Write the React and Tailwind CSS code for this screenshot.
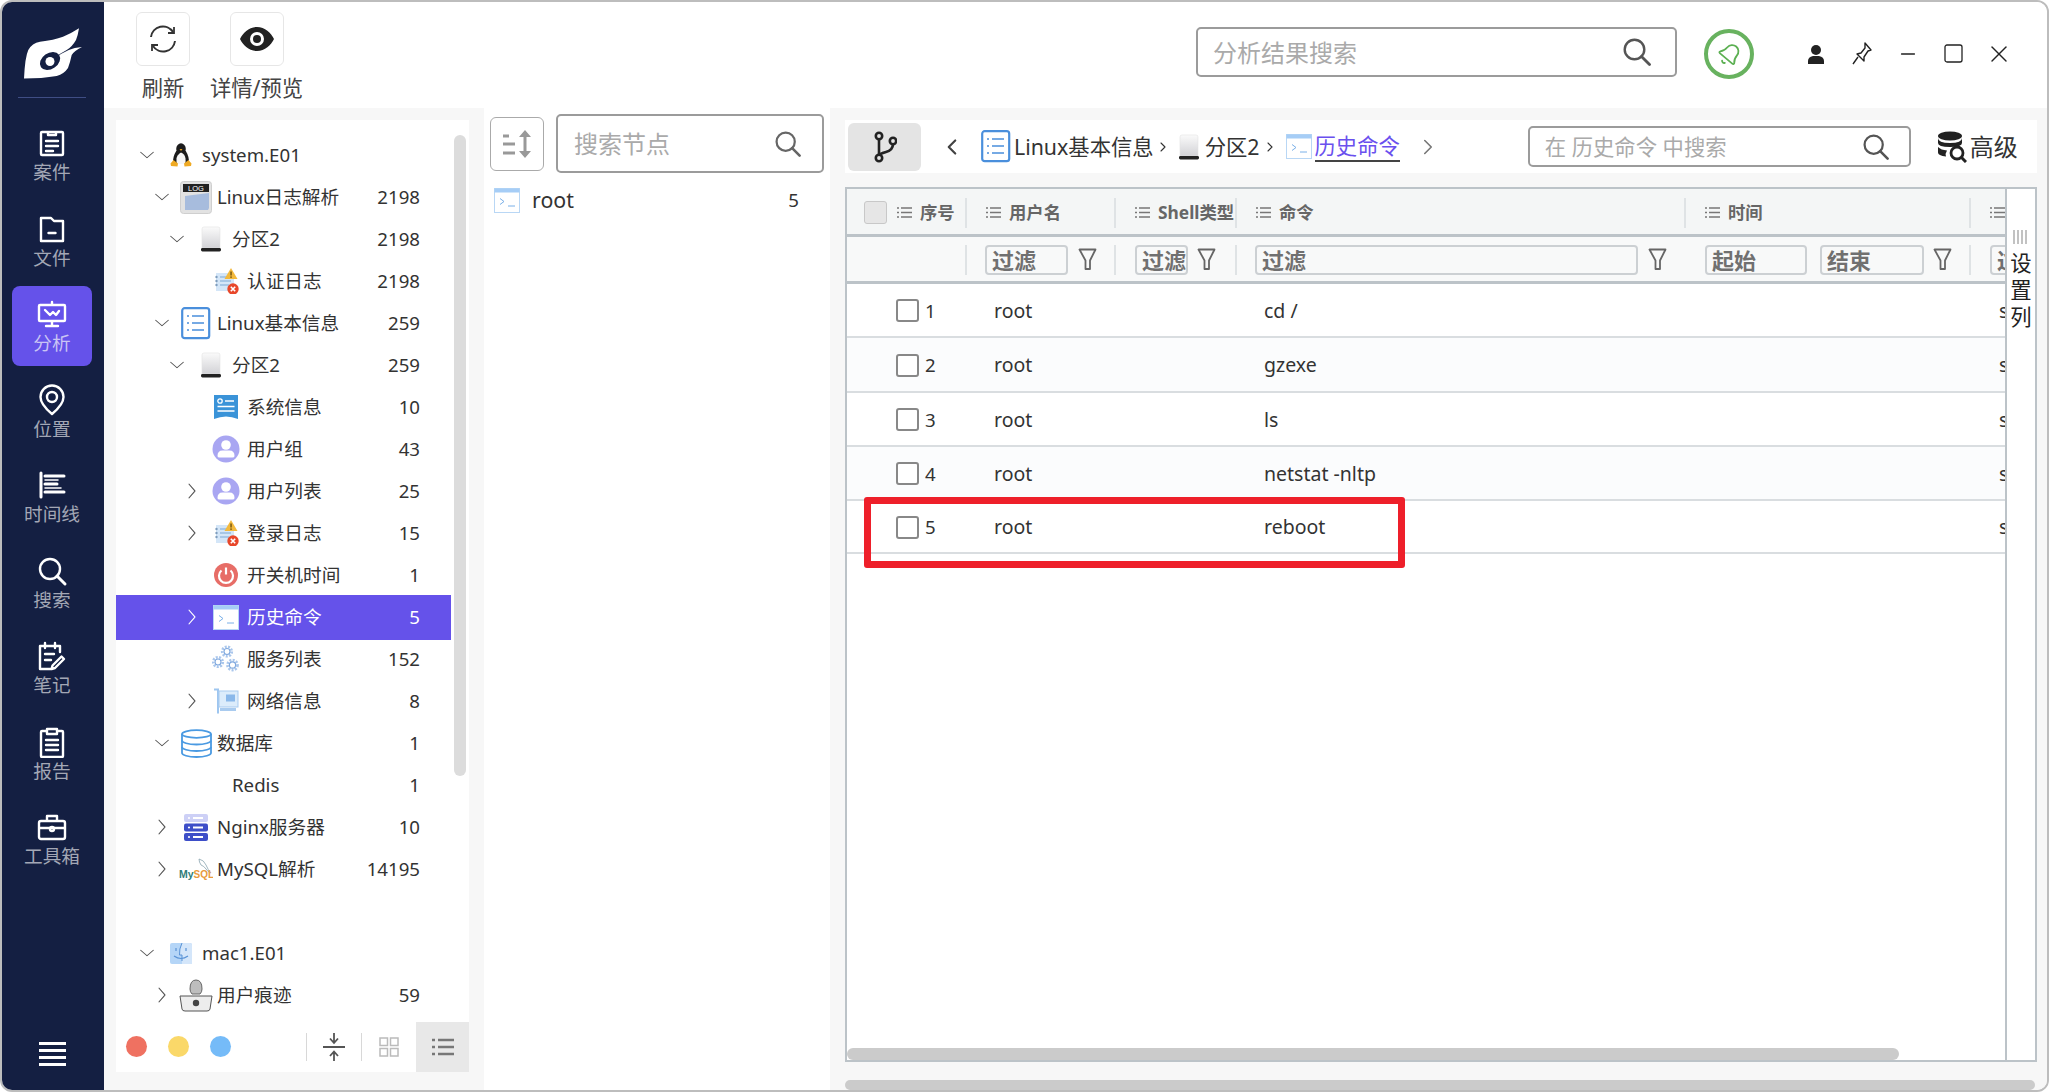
import React from 'react';
import { ChevronDown, ChevronRight, ChevronLeft, Minus, X, Bell } from 'lucide-react';

const Nav = ({ label, active, children }) => (
  <div className={`w-[80px] h-[80px] rounded-[8px] flex flex-col items-center pt-[14px] ${active ? 'bg-[#6552ea] text-[#c9c4f4]' : 'text-[#a3a7b5]'}`}>
    <svg width="32" height="32" viewBox="0 0 32 32" fill="none" stroke="#fff" strokeWidth="2.4" strokeLinecap="round" strokeLinejoin="round" className="-my-[2px]">{children}</svg>
    <span className="text-[18.67px] leading-[24px] mt-[3px] whitespace-nowrap">{label}</span>
  </div>
);

const Lens = ({ size, color }) => (
  <svg width={size} height={size} viewBox="0 0 28 28" fill="none" stroke={color} strokeWidth="2.4" strokeLinecap="round" className="ml-auto shrink-0">
    <circle cx="11.500" cy="11.500" r="9.800" /><path d="M18.500 18.500l8 8" strokeWidth="2.800" />
  </svg>
);

const Disk = () => (
  <svg width="24" height="28" viewBox="0 0 24 28">
    <defs><linearGradient id="dk" x1="0" y1="0" x2="0" y2="1"><stop offset="0" stopColor="#fafafa" /><stop offset="1" stopColor="#d2d2d6" /></linearGradient></defs>
    <path d="M3 4q0-2 2-2h14q2 0 2 2v19H3z" fill="url(#dk)" stroke="#e3e3e3" strokeWidth=".6" />
    <rect x="2" y="23" width="20" height="3.4" rx="1.4" fill="#222" />
  </svg>
);
const Alert = () => (
  <svg width="26" height="26" viewBox="0 0 26 26">
    <rect x="3" y="5" width="18" height="18" fill="#d4e6f8" />
    <g stroke="#7aa7d4" strokeWidth="1"><path d="M7 9h11M7 13h11M7 17h9" /></g>
    <g fill="#7f9dbd"><circle cx="3.5" cy="9" r="1.2" /><circle cx="3.5" cy="13" r="1.2" /><circle cx="3.5" cy="17" r="1.2" /></g>
    <path d="M18 0l6.5 11h-13z" fill="#f3b93c" />
    <rect x="17.3" y="3.5" width="1.5" height="4" fill="#7a5a12" /><rect x="17.3" y="8.4" width="1.5" height="1.5" fill="#7a5a12" />
    <circle cx="20" cy="21" r="5.7" fill="#e8472a" />
    <path d="M17.8 18.8l4.4 4.4M22.2 18.8l-4.4 4.4" stroke="#fff" strokeWidth="1.6" />
  </svg>
);
const ListI = () => (
  <svg width="30" height="33" viewBox="0 0 30 33" fill="none">
    <rect x="1.2" y="1.2" width="27" height="30" rx="2.5" stroke="#4a8fdc" strokeWidth="2.2" fill="#fff" />
    <g stroke="#4a8fdc" strokeWidth="1.6"><path d="M11 9h12M11 16h12M11 23h12M6 9h2M6 16h2M6 23h2" /></g>
  </svg>
);
const SysInfo = () => (
  <svg width="26" height="26" viewBox="0 0 26 26">
    <path d="M1 1h24v24q-6-2.6-12-2.6T1 25z" fill="#3a93d8" />
    <circle cx="7" cy="7" r="2.2" fill="none" stroke="#fff" strokeWidth="1.3" />
    <path d="M12 7h9M4.500 12.500h17M4.500 17h17" stroke="#fff" strokeWidth="1.6" />
  </svg>
);
const User = () => (
  <svg width="28" height="28" viewBox="0 0 28 28">
    <circle cx="14" cy="14" r="13.500" fill="#a9a6f2" />
    <circle cx="14" cy="10" r="4.800" fill="#fff" />
    <path d="M5.500 21q0-5.500 5-5.500h7q5 0 5 5.500 0 1.500-2 1.500h-13q-2 0-2-1.500z" fill="#fff" />
  </svg>
);
const Power = () => (
  <svg width="26" height="26" viewBox="0 0 26 26" fill="none">
    <circle cx="13" cy="13" r="12" fill="#e76d67" />
    <path d="M8.500 8.500a7 7 0 1 0 9 0" stroke="#fff" strokeWidth="2.200" />
    <path d="M13 5.500v7" stroke="#fff" strokeWidth="2.200" />
  </svg>
);
const Term = () => (
  <svg width="26" height="25" viewBox="0 0 26 25">
    <rect x=".5" y=".5" width="25" height="24" fill="#fff" stroke="#b9d7f5" />
    <rect x=".5" y=".5" width="25" height="4" fill="#a6cdf6" />
    <path d="M6 10.500l4 3-4 3" fill="none" stroke="#7ab0e8" strokeWidth="1" />
    <path d="M14 18h7" stroke="#7ab0e8" strokeWidth="1" />
  </svg>
);
const Gear = ({ cx, cy, r }) => (
  <g>
    <circle cx={cx} cy={cy} r={r} fill="none" stroke="#a9c6ec" strokeWidth={r * 0.55} strokeDasharray="2 1.300" />
    <circle cx={cx} cy={cy} r={r * 0.62} fill="none" stroke="#7fa8de" strokeWidth="1.100" />
  </g>
);
const Gears = () => (
  <svg width="28" height="28" viewBox="0 0 28 28"><Gear cx={15} cy={6.500} r={4.800} /><Gear cx={6} cy={17} r={4.800} /><Gear cx={20.500} cy={20} r={5} /></svg>
);
const NetCard = () => (
  <svg width="26" height="28" viewBox="0 0 26 28">
    <path d="M1 1.500h5v25H4V3.500H1z" fill="#9ec6f0" />
    <rect x="6" y="4" width="19" height="16" fill="#dcecfb" stroke="#a9cbef" />
    <rect x="13" y="7.500" width="9" height="7" fill="#8ab8ea" />
    <rect x="7" y="21" width="16" height="3" fill="#a9cbef" />
  </svg>
);
const Db = () => (
  <svg width="31" height="29" viewBox="0 0 31 29" fill="#fff" stroke="#4a9ae2" strokeWidth="1.800">
    <path d="M1 5v19c0 2 6 4 14.500 4S30 26 30 24V5" />
    <ellipse cx="15.500" cy="5" rx="14.500" ry="3.800" fill="#fff" />
    <path d="M1 11.500c0 2 6 4 14.500 4s14.500-2 14.500-4M1 18c0 2 6 4 14.500 4S30 20 30 18" fill="none" />
  </svg>
);
const Nginx = () => (
  <svg width="26" height="28" viewBox="0 0 26 28">
    <rect x="1" y="1" width="24" height="8" rx="2" fill="#cdd0f6" />
    <rect x="1" y="10.500" width="24" height="8" rx="2" fill="#3d4ec8" />
    <rect x="1" y="20" width="24" height="8" rx="2" fill="#3d4ec8" />
    <g fill="#fff"><circle cx="6" cy="5" r="1.100" /><rect x="10" y="4" width="10" height="2" /><circle cx="6" cy="14.500" r="1.100" /><rect x="10" y="13.500" width="10" height="2" /><circle cx="6" cy="24" r="1.100" /><rect x="10" y="23" width="10" height="2" /></g>
  </svg>
);
const MySql = () => (
  <svg width="34" height="22" viewBox="0 0 34 22">
    <path d="M20 1q5 1 7 6t5 8q-3-1-5-4t-5-4q-2-3-2-6z" fill="none" stroke="#8aa4b0" strokeWidth=".8" />
    <text x="0" y="20" fontSize="10.500" fontWeight="700" fontFamily="Liberation Sans" fill="#2f7d78">My</text>
    <text x="14.500" y="20" fontSize="10" fontFamily="Liberation Sans" fontWeight="700" fill="#e89a3c">SQL</text>
  </svg>
);
const Finder = () => (
  <svg width="24" height="23" viewBox="0 0 24 23">
    <rect x="1" y="1" width="22" height="21" rx="2" fill="#b4d5f7" />
    <path d="M13 1q-3 6-2.500 12H13v9h10V3q0-2-2-2z" fill="#d4e6fa" />
    <path d="M7 6v3M17 6v3M5 14q7 5 14 0" fill="none" stroke="#5a93d6" strokeWidth="1.200" />
    <path d="M13 1q-3 6-2.500 12H13v6" fill="none" stroke="#5a93d6" strokeWidth="1" />
  </svg>
);
const UserLap = () => (
  <svg width="34" height="34" viewBox="0 0 34 34">
    <path d="M11 11q0-9 6-9t6 9q0 3-2 5h-8q-2-2-2-5z" fill="#bdbdbd" stroke="#666" />
    <path d="M1 18h32l-2 13q-.300 2-3 2H6q-2.700 0-3-2z" fill="#ededed" stroke="#555" />
    <circle cx="17" cy="25" r="3.200" fill="#444" />
  </svg>
);
const Penguin = () => (
  <svg width="22" height="24" viewBox="0 0 22 24">
    <ellipse cx="11" cy="6" rx="4.800" ry="5.800" fill="#1c1c1c" />
    <path d="M6.200 8Q2.500 14 3.200 20h15.600Q19.500 14 15.800 8z" fill="#1c1c1c" />
    <path d="M11 9.500Q15 11 15.500 15.500T14.500 21h-7Q6 19 6.500 15.500T11 9.500z" fill="#f6f6f6" />
    <path d="M9.500 6h3L11 8z" fill="#e8a020" />
    <path d="M3.500 17l4.500 3.500-.500 3-6.500-.5-.5-2.500zM18.500 17l-4.500 3.500.500 3 6.500-.5.500-2.500z" fill="#efaa24" />
  </svg>
);
const LogI = () => (
  <svg width="32" height="33" viewBox="0 0 32 33">
    <rect x=".5" y=".5" width="31" height="32" rx="3" fill="#e2e2e2" stroke="#cfcfcf" />
    <rect x="3" y="3" width="26" height="8" fill="#222" />
    <text x="16" y="10" textAnchor="middle" fontSize="7.500" fontFamily="Liberation Sans" fill="#fff">LOG</text>
    <path d="M5 15l24-3v15l-1 2H5z" fill="#a7bcdd" />
  </svg>
);

const icons = { Disk, Alert, ListI, SysInfo, User, Power, Term, Gears, NetCard, Db, Nginx, MySql, Finder, UserLap, Penguin, LogI };

const rows = [
  { l: 0, o: 'd', i: 'Penguin', t: 'system.E01' },
  { l: 1, o: 'd', i: 'LogI', t: 'Linux日志解析', c: '2198' },
  { l: 2, o: 'd', i: 'Disk', t: '分区2', c: '2198' },
  { l: 3, i: 'Alert', t: '认证日志', c: '2198' },
  { l: 1, o: 'd', i: 'ListI', t: 'Linux基本信息', c: '259' },
  { l: 2, o: 'd', i: 'Disk', t: '分区2', c: '259' },
  { l: 3, i: 'SysInfo', t: '系统信息', c: '10' },
  { l: 3, i: 'User', t: '用户组', c: '43' },
  { l: 3, o: 'r', i: 'User', t: '用户列表', c: '25' },
  { l: 3, o: 'r', i: 'Alert', t: '登录日志', c: '15' },
  { l: 3, i: 'Power', t: '开关机时间', c: '1' },
  { l: 3, o: 'r', i: 'Term', t: '历史命令', c: '5', sel: true },
  { l: 3, i: 'Gears', t: '服务列表', c: '152' },
  { l: 3, o: 'r', i: 'NetCard', t: '网络信息', c: '8' },
  { l: 1, o: 'd', i: 'Db', t: '数据库', c: '1' },
  { l: 2, t: 'Redis', c: '1' },
  { l: 1, o: 'r', i: 'Nginx', t: 'Nginx服务器', c: '10' },
  { l: 1, o: 'r', i: 'MySql', t: 'MySQL解析', c: '14195' },
  { blank: true },
  { l: 0, o: 'd', i: 'Finder', t: 'mac1.E01' },
  { l: 1, o: 'r', i: 'UserLap', t: '用户痕迹', c: '59' },
];

const pads = ['pl-[16px]', 'pl-[31px]', 'pl-[46px]', 'pl-[61px]'];

const TreeRow = ({ r }) => {
  if (r.blank) return <div className="h-[42px]" />;
  const I = r.i && icons[r.i];
  return (
    <div className={`flex items-center pr-[31px] ${pads[r.l]} ${r.sel ? 'h-[45px] -my-[1.5px] bg-[#6552ea] text-white relative' : 'h-[42px] text-[#333]'}`}>
      <span className="w-[30px] flex justify-center shrink-0">
        {r.o === 'd' && <ChevronDown size={22} strokeWidth={1} className="text-[#555] scale-x-[1.15]" />}
        {r.o === 'r' && <ChevronRight size={24} strokeWidth={1} className={`scale-y-[1.15] ${r.sel ? 'text-white' : 'text-[#555]'}`} />}
      </span>
      <span className="w-[38px] flex justify-center shrink-0">{I && <I />}</span>
      <span className="ml-[2px] whitespace-nowrap">{r.t}</span>
      <span className="ml-auto">{r.c}</span>
    </div>
  );
};

const ListMini = () => (
  <svg width="15" height="13" viewBox="0 0 15 13" stroke="#777" strokeWidth="1.500" className="shrink-0"><path d="M4 2h11M4 6.500h11M4 11h11M0 2h2M0 6.500h2M0 11h2" /></svg>
);
const Funnel = () => (
  <svg width="19" height="23" viewBox="0 0 19 23" fill="none" stroke="#666" strokeWidth="1.800" strokeLinejoin="round" className="shrink-0"><path d="M1.500 1.500h16L12 12.500V21H7.500v-8.500z" /></svg>
);
const Sep = () => <div className="w-[2px] h-[30px] bg-[#dfe3e5] ml-auto shrink-0" />;
const FInput = ({ cls, t }) => (
  <div className={`${cls} h-[30px] border-2 border-[#ccd0d3] rounded-[4px] pl-[5px] pr-[2px] flex items-center text-[22px] font-bold text-[#707070] leading-none overflow-hidden bg-[#f8f9f9] shrink-0 whitespace-nowrap`}>{t}</div>
);
const HCell = ({ pad, t }) => (
  <div className={`flex items-center ${pad} overflow-hidden`}>
    <ListMini />
    <span className="ml-[8px] text-[17.33px] font-bold text-[#666] whitespace-nowrap">{t}</span>
    <Sep />
  </div>
);
const columns = 'grid grid-cols-[120px_149px_121px_449px_285px_100px]';
const data = [['1', 'cd /', 'h-[54px]'], ['2', 'gzexe', 'h-[55px] bg-[#fbfcfd]'], ['3', 'ls', 'h-[54px]'], ['4', 'netstat -nltp', 'h-[54px] bg-[#fbfcfd]'], ['5', 'reboot', 'h-[53px]']];

const Chk = ({ cls }) => <span className={`w-[23px] h-[23px] rounded-[3px] border-[2.5px] shrink-0 ${cls}`} />;

export default function App() {
  return (
    <div className="w-[2049px] h-[1092px] overflow-hidden rounded-[12px] border-2 border-[#bdbdbd] bg-white flex text-[18.67px] [font-family:'Noto_Sans','Noto_Sans_CJK_SC',sans-serif]">
      {/* sidebar */}
      <aside className="w-[102px] shrink-0 bg-[#141f42] flex flex-col items-center pb-[24px] pr-[2px]">
        <svg width="60" height="54" viewBox="0 0 60 54" className="mt-[25px] shrink-0">
          <path d="M2 51.500Q3 30 6.300 23Q10 16 18 14.700Q32 13 41 9.700Q50 6 57 1.300Q56 8 54 13Q50 20 44.700 23Q38 26 34 31Q45 21 60 20Q52 24 49.700 28Q48 36 46 41Q42 47 34.700 49Q20 51.500 2 51.500Z" fill="#fff" />
          <ellipse cx="28" cy="34" rx="11" ry="8" fill="#141f42" transform="rotate(-35 28 34)" />
          <circle cx="28" cy="34.500" r="4.500" fill="#fff" />
        </svg>
        <div className="w-[68px] h-[1px] bg-[#3f4d84] mt-[16px] mb-[17px] shrink-0" />
        <div className="flex flex-col gap-[5.5px]">
          <Nav label="案件"><path d="M6 5h20a1 1 0 0 1 1 1v21a1 1 0 0 1-1 1H6a1 1 0 0 1-1-1V6a1 1 0 0 1 1-1zM12 5v3h8V5M10 14h12M10 19h12M10 24h7" /></Nav>
          <Nav label="文件"><path d="M5 5h10l3 3h9v20H5zM12.500 20h7" /></Nav>
          <Nav label="分析" active><path d="M4 7h24a1 1 0 0 1 1 1v14a1 1 0 0 1-1 1H4a1 1 0 0 1-1-1V8a1 1 0 0 1 1-1zM16 4v3M16 23v5M10 28h12M9 12l5 5 3-3 3 3 3-4" /></Nav>
          <Nav label="位置"><path d="M16 30C10 25 4.500 19 4.500 13a11.500 11.500 0 0 1 23 0c0 6-5.500 12-11.500 17z" /><circle cx="16" cy="13" r="5" /></Nav>
          <Nav label="时间线"><path d="M5 4v24" strokeWidth="3" /><path d="M9 7h19M9 15h12M9 23h19" strokeWidth="3" /><path d="M9 11h13M9 19h16" strokeWidth="1.500" /></Nav>
          <Nav label="搜索"><circle cx="14" cy="14" r="10" /><path d="M21 21l8 8" strokeWidth="3" /></Nav>
          <Nav label="笔记"><path d="M24 12V6H4v23h12M9 3v5M19 3v5M9 14h9M9 20h6M19 28l9-9-2.500-2.500-9 9-1 3.500z" /></Nav>
          <Nav label="报告"><path d="M11 5H6a1 1 0 0 0-1 1v24a1 1 0 0 0 1 1h20a1 1 0 0 0 1-1V6a1 1 0 0 0-1-1h-5M11 3h10v5H11zM10 14h12M10 19h12M10 24h12" /></Nav>
          <Nav label="工具箱"><path d="M5 10h22a2 2 0 0 1 2 2v14a2 2 0 0 1-2 2H5a2 2 0 0 1-2-2V12a2 2 0 0 1 2-2zM11 10V5h10v5M3 17h26" /><circle cx="16" cy="18" r="2" /></Nav>
        </div>
        <div className="mt-auto flex flex-col gap-[4px] w-[27px]">
          <div className="h-[3px] bg-white" /><div className="h-[3px] bg-white" /><div className="h-[3px] bg-white" /><div className="h-[3px] bg-white" />
        </div>
      </aside>

      <div className="flex-1 flex flex-col min-w-0">
        {/* toolbar */}
        <header className="h-[106px] shrink-0 flex items-start pl-[32px] bg-white">
          <div className="flex flex-col items-center w-[54px] mt-[10px]">
            <div className="w-[54px] h-[54px] border border-[#e6e6e6] rounded-[6px] flex items-center justify-center shrink-0">
              <svg width="30" height="30" viewBox="0 0 30 30" fill="none" stroke="#333" strokeWidth="2"><path d="M3 13a12 12 0 0 1 22-5M27 17a12 12 0 0 1-22 5" /><path d="M26 3v6h-6M4 27v-6h6" strokeWidth="1.800" /></svg>
            </div>
            <span className="text-[21.33px] text-[#444] leading-[30px] mt-[7px] whitespace-nowrap">刷新</span>
          </div>
          <div className="flex flex-col items-center w-[93px] ml-[20px] mt-[10px]">
            <div className="w-[54px] h-[54px] border border-[#e6e6e6] rounded-[6px] flex items-center justify-center shrink-0">
              <svg width="34" height="24" viewBox="0 0 34 24"><path fillRule="evenodd" d="M17 0C9 0 3 6 0 12c3 6 9 12 17 12s14-6 17-12C31 6 25 0 17 0zm0 5a7 7 0 1 1 0 14 7 7 0 0 1 0-14z" fill="#222" /><circle cx="17" cy="12" r="4" fill="#222" /></svg>
            </div>
            <span className="text-[21.33px] text-[#444] leading-[30px] mt-[7px] whitespace-nowrap">详情/预览</span>
          </div>
          <div className="ml-auto mt-[25px] w-[481px] h-[50px] border-2 border-[#9b9b9b] rounded-[5px] flex items-center pl-[15px] pr-[24px] text-[24px] text-[#aaa]">
            <span className="translate-y-[1px]">分析结果搜索</span>
            <Lens size={28} color="#555" />
          </div>
          <div className="ml-[27px] mt-[27px] w-[50px] h-[50px] rounded-full border-[4px] border-[#68b25f] flex items-center justify-center">
            <Bell size={25} strokeWidth={1.700} className="text-[#5cb052] rotate-[40deg]" />
          </div>
          <div className="ml-[39px] mr-[24px] mt-[30px] flex items-center h-[44px]">
            <span className="w-[46px] flex justify-center">
              <svg width="18" height="20" viewBox="0 0 18 20" fill="#222"><circle cx="9" cy="6" r="5" /><path d="M1 20v-3q0-4 5-5h6q5 1 5 5v3z" /></svg>
            </span>
            <span className="w-[46px] flex justify-center">
              <svg width="22" height="24" viewBox="0 0 22 24" fill="none" stroke="#222" strokeWidth="1.400" strokeLinejoin="round"><path d="M14 1l6 7-3 1-4 6 0 4-7-7 4-1 4-5zM7 15L2 22" /></svg>
            </span>
            <span className="w-[46px] flex justify-center"><Minus size={22} strokeWidth={1.6} className="text-[#222]" /></span>
            <span className="w-[46px] flex justify-center"><svg width="20" height="20" viewBox="0 0 20 20" fill="none" stroke="#222" strokeWidth="1.300"><rect x="1" y="1" width="17" height="17" rx="2" /></svg></span>
            <span className="w-[46px] flex justify-center -translate-x-[1px]"><X size={28} strokeWidth={1.200} className="text-[#222]" /></span>
          </div>
        </header>

        <div className="flex-1 flex bg-[#f7f7f7] min-h-0">
          {/* tree */}
          <section className="relative w-[353px] ml-[12px] mt-[12px] mb-[18px] bg-white flex flex-col shrink-0">
            <div className="flex-1 pt-[14px] w-[335px] overflow-hidden">
              {rows.map((r, i) => <TreeRow key={i} r={r} />)}
            </div>
            <div className="absolute right-[3px] top-[15px] w-[12px] h-[641px] rounded-[6px] bg-[#dcdcdc]" />
            <div className="h-[50px] shrink-0 flex items-center relative bg-white pl-[10px]">
              <span className="w-[21px] h-[21px] rounded-full bg-[#ef7161] -translate-y-[1px]" />
              <span className="w-[21px] h-[21px] rounded-full bg-[#fad869] ml-[21px] -translate-y-[1px]" />
              <span className="w-[21px] h-[21px] rounded-full bg-[#75bbf8] ml-[21px] -translate-y-[1px]" />
              <span className="w-[1px] h-[28px] bg-[#d8d8d8] ml-[75px]" />
              <span className="w-[54px] flex justify-center">
                <svg width="22" height="30" viewBox="0 0 22 30" fill="none" stroke="#555" strokeWidth="1.800"><path d="M0 15h22M11 1v9M7 6.500l4 4.500 4-4.500M11 29v-9M7 24l4-4.500 4 4.500" /></svg>
              </span>
              <span className="w-[1px] h-[28px] bg-[#d8d8d8]" />
              <span className="w-[54px] flex justify-center">
                <svg width="20" height="20" viewBox="0 0 20 20" fill="none" stroke="#bbb" strokeWidth="1.500"><rect x="1" y="1" width="7.500" height="7.500" /><rect x="11.500" y="1" width="7.500" height="7.500" /><rect x="1" y="11.500" width="7.500" height="7.500" /><rect x="11.500" y="11.500" width="7.500" height="7.500" /></svg>
              </span>
              <span className="w-[53px] h-[50px] bg-[#e8e8e8] flex items-center justify-center">
                <svg width="22" height="18" viewBox="0 0 22 18" stroke="#777" strokeWidth="2.400"><path d="M6 2h16M6 9h16M6 16h16M0 2h3M0 9h3M0 16h3" /></svg>
              </span>
            </div>
          </section>

          {/* middle */}
          <section className="w-[346px] ml-[15px] bg-white shrink-0 pt-[6px] px-[6px]">
            <div className="flex items-center gap-[12px]">
              <div className="w-[54px] h-[54px] border border-[#aaa] rounded-[6px] flex items-center justify-center">
                <svg width="32" height="32" viewBox="0 0 32 32" stroke="#999" strokeWidth="3" fill="none"><path d="M2 8h6M2 16h12M2 25h12" /><path d="M24 4v24" /><path d="M18 9l6-7 6 7zM18 23l6 7 6-7z" fill="#999" stroke="none" /></svg>
              </div>
              <div className="w-[268px] h-[59px] border-2 border-[#9b9b9b] rounded-[5px] flex items-center pl-[16px] pr-[21px] text-[24px] text-[#aaa]">
                <span>搜索节点</span>
                <Lens size={26} color="#666" />
              </div>
            </div>
            <div className="flex items-center h-[40px] mt-[7px] pl-[4px] pr-[25px] text-[#333]">
              <Term />
              <span className="ml-[12px] text-[21.33px]">root</span>
              <span className="ml-auto">5</span>
            </div>
          </section>

          {/* right */}
          <section className="flex-1 min-w-0 pl-[15px] pr-[10px] pt-[12px] flex flex-col">
            <div className="h-[53px] shrink-0 bg-white flex items-center pl-[3px] text-[21.33px] text-[#333] whitespace-nowrap">
              <div className="w-[73px] h-[48px] rounded-[6px] bg-[#e4e4e4] flex items-center justify-center">
                <svg width="24" height="32" viewBox="0 0 24 32" fill="none" stroke="#222" strokeWidth="2.600"><circle cx="6" cy="5" r="3.200" /><circle cx="6" cy="27" r="3.200" /><circle cx="20" cy="10" r="3.200" /><path d="M6 8v16M20 13q0 6-7 8t-7 3" /></svg>
              </div>
              <ChevronLeft size={26} strokeWidth={2} className="ml-[18px] text-[#444]" />
              <span className="ml-[16px]"><ListI /></span>
              <span className="ml-[3px]">Linux基本信息</span>
              <ChevronRight size={16} strokeWidth={1.600} className="ml-[1px] text-[#333]" />
              <span className="ml-[6px] w-[24px] flex"><Disk /></span>
              <span className="ml-[4px]">分区2</span>
              <ChevronRight size={16} strokeWidth={1.600} className="ml-[2px] text-[#333]" />
              <span className="ml-[8px]"><Term /></span>
              <span className="ml-[3px] text-[#6a50ee] border-b-2 border-[#444] leading-[29px]">历史命令</span>
              <ChevronRight size={26} strokeWidth={1.500} className="ml-[15px] text-[#777]" />
              <div className="ml-[87px] w-[383px] h-[41px] border-2 border-[#9b9b9b] rounded-[5px] flex items-center pl-[15px] pr-[20px] text-[#aaa]">
                <span>在 历史命令 中搜索</span>
                <Lens size={26} color="#555" />
              </div>
              <svg width="30" height="32" viewBox="0 0 30 32" className="ml-[26px] shrink-0">
                <ellipse cx="13" cy="5" rx="12" ry="4.500" fill="#222" />
                <path d="M1 7q0 5 12 5t12-5v5q0 4-12 4T1 12zM1 16q3 3 9 3.500-2 3-1 6-8-1-8-4z" fill="#222" />
                <circle cx="20" cy="22" r="6" fill="none" stroke="#222" strokeWidth="2.800" />
                <path d="M24 26l5 5" stroke="#222" strokeWidth="3" />
              </svg>
              <span className="ml-[3px] text-[24px]">高级</span>
            </div>

            {/* table */}
            <div className="relative mt-[14px] h-[875px] shrink-0 border-2 border-[#bcc3c8] bg-white flex flex-col overflow-hidden">
              <div className={`${columns} h-[48px] pt-[2px] bg-[#f4f6f6] border-b-[3px] border-[#bcc3c8] shrink-0`}>
                <div className="flex items-center pl-[17px] overflow-hidden">
                  <span className="w-[23px] h-[23px] rounded-[3px] bg-[#e6e6e6] border border-[#c8c8c8] shrink-0" />
                  <span className="ml-[10px]"><ListMini /></span>
                  <span className="ml-[8px] text-[17.33px] font-bold text-[#666] whitespace-nowrap">序号</span>
                  <Sep />
                </div>
                <HCell pad="pl-[19px]" t="用户名" />
                <HCell pad="pl-[19px]" t="Shell类型" />
                <HCell pad="pl-[19px]" t="命令" />
                <HCell pad="pl-[19px]" t="时间" />
                <div className="flex items-center pl-[19px] overflow-hidden"><ListMini /></div>
              </div>
              <div className={`${columns} h-[47px] pt-[1px] bg-[#f8f9f9] border-b-[3px] border-[#bcc3c8] shrink-0`}>
                <div className="flex items-center"><Sep /></div>
                <div className="flex items-center pl-[18px]"><FInput cls="w-[83px]" t="过滤" /><span className="ml-[10px]"><Funnel /></span><Sep /></div>
                <div className="flex items-center pl-[19px]"><FInput cls="w-[53px]" t="过滤" /><span className="ml-[9px]"><Funnel /></span><Sep /></div>
                <div className="flex items-center pl-[18px]"><FInput cls="w-[383px]" t="过滤" /><span className="ml-[10px]"><Funnel /></span></div>
                <div className="flex items-center pl-[19px]"><FInput cls="w-[102px]" t="起始" /><span className="ml-[13px]"><FInput cls="w-[104px]" t="结束" /></span><span className="ml-[9px]"><Funnel /></span><Sep /></div>
                <div className="flex items-center pl-[19px] overflow-hidden"><FInput cls="w-[60px]" t="过滤" /></div>
              </div>
              {data.map(([n, cmd, cls]) => (
                <div key={n} className={`${columns} ${cls} pt-[1px] border-b-2 border-[#d9dde0] shrink-0 text-[#333] text-[19.5px]`}>
                  <div className="flex items-center pl-[49px]"><Chk cls="border-[#888] bg-white" /><span className="ml-[6px] text-[18.67px]">{n}</span></div>
                  <div className="flex items-center pl-[27px]">root</div>
                  <div />
                  <div className="flex items-center pl-[27px]">{cmd}</div>
                  <div />
                  <div className="flex items-center pl-[28px]">s</div>
                </div>
              ))}
              <div className="mt-auto h-[12px] w-[1052px] rounded-[6px] bg-[#cbcbcb] shrink-0" />
              <div className="absolute right-0 top-0 bottom-0 w-[30px] bg-white border-l-2 border-[#bcc3c8] flex flex-col items-center pt-[41px]">
                <svg width="18" height="14" viewBox="0 0 18 14" stroke="#999" strokeWidth="1.200" className="shrink-0"><path d="M2 0v14M6 0v14M10 0v14M14 0v14" /></svg>
                <span className="text-[21.33px] leading-[27px] text-[#222] text-center mt-[5px] w-[22px]">设置列</span>
              </div>
              <div className="absolute left-[17px] top-[308px] w-[541px] h-[71px] border-[7px] border-[#ee1f2a] rounded-[3px]" />
            </div>
            <div className="mt-[auto] h-[10px] w-[1190px] rounded-[5px] bg-[#cbcbcb] shrink-0" />
          </section>
        </div>
      </div>
    </div>
  );
}
